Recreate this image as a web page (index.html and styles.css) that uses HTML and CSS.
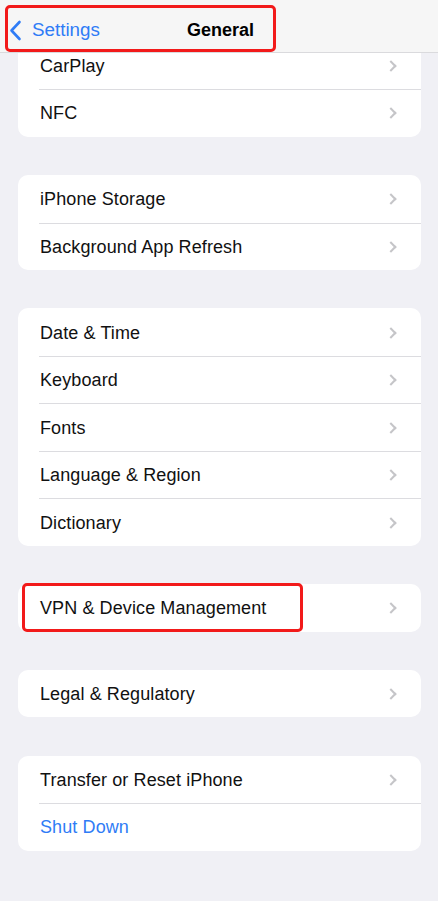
FILE: index.html
```html
<!DOCTYPE html>
<html>
<head>
<meta charset="utf-8">
<link rel="stylesheet" href="styles.css">
</head>
<body>
<div class="screen">
  <header class="nav">
    <div class="nav-back">
      <svg class="back-icon" width="13" height="21" viewBox="0 0 13 21"><path d="M10.5 2 L2.5 10.5 L10.5 19" fill="none" stroke="#2f7cf6" stroke-width="2.6" stroke-linecap="round" stroke-linejoin="round"/></svg>
      <span class="back-label">Settings</span>
    </div>
    <div class="nav-title">General</div>
    <div class="highlight nav-highlight"></div>
  </header>
  <main class="content">
    <section class="card first">
      <div class="row"><span class="label">CarPlay</span><span class="chev"></span></div>
      <div class="row"><span class="label">NFC</span><span class="chev"></span></div>
    </section>
    <section class="card">
      <div class="row"><span class="label">iPhone Storage</span><span class="chev"></span></div>
      <div class="row"><span class="label">Background App Refresh</span><span class="chev"></span></div>
    </section>
    <section class="card">
      <div class="row"><span class="label">Date &amp; Time</span><span class="chev"></span></div>
      <div class="row"><span class="label">Keyboard</span><span class="chev"></span></div>
      <div class="row"><span class="label">Fonts</span><span class="chev"></span></div>
      <div class="row"><span class="label">Language &amp; Region</span><span class="chev"></span></div>
      <div class="row"><span class="label">Dictionary</span><span class="chev"></span></div>
    </section>
    <section class="card vpn">
      <div class="row"><span class="label">VPN &amp; Device Management</span><span class="chev"></span></div>
      <div class="highlight vpn-highlight"></div>
    </section>
    <section class="card">
      <div class="row"><span class="label">Legal &amp; Regulatory</span><span class="chev"></span></div>
    </section>
    <section class="card">
      <div class="row"><span class="label">Transfer or Reset iPhone</span><span class="chev"></span></div>
      <div class="row"><span class="label action">Shut Down</span></div>
    </section>
  </main>
</div>
</body>
</html>
```

FILE: styles.css
```css
* { box-sizing: border-box; }
html, body {
  margin: 0;
  padding: 0;
  background: #f0f0f5;
}
body {
  font-family: "Liberation Sans", Arial, sans-serif;
  color: #111;
  -webkit-font-smoothing: antialiased;
}
.screen {
  width: 438px;
  height: 901px;
  overflow: hidden;
  position: relative;
}
.nav {
  position: relative;
  z-index: 2;
  height: 53px;
  background: #f6f6f6;
  border-bottom: 1px solid #dadadd;
  display: flex;
  align-items: center;
}
.nav-back {
  display: flex;
  align-items: center;
  padding-left: 9px;
  margin-top: 8px;
}
.back-icon { display: block; }
.back-label {
  color: #2f7cf6;
  font-size: 18.8px;
  margin-left: 10px;
}
.nav-title {
  position: absolute;
  left: 187px;
  top: 20px;
  font-size: 18px;
  font-weight: bold;
  color: #000;
}
.highlight {
  position: absolute;
  border: 3px solid #f21a1a;
  border-radius: 5px;
  pointer-events: none;
}
.nav-highlight {
  left: 5px;
  top: 5px;
  width: 271px;
  height: 47px;
}
.content {
  position: relative;
  z-index: 1;
  display: flex;
  flex-direction: column;
  gap: 38.3px;
  padding: 0 17px 0 18px;
}
.card {
  position: relative;
  background: #fff;
  border-radius: 10px;
}
.card.first { margin-top: -11.3px; }
.row {
  height: 47.5px;
  display: flex;
  align-items: center;
  justify-content: space-between;
  padding: 0 22px 0 22px;
  position: relative;
}
.row + .row::before {
  content: "";
  position: absolute;
  left: 21px;
  right: 0;
  top: 0;
  border-top: 1px solid #dcdce0;
}
.label {
  font-size: 18px;
  color: #111;
  letter-spacing: 0.1px;
  padding-top: 2px;
}
.label.action { color: #2f7cf6; }
.chev {
  width: 8px;
  height: 8px;
  border-top: 2px solid #c5c5c8;
  border-right: 2px solid #c5c5c8;
  transform: rotate(45deg);
  margin-right: 4px;
  margin-top: 1px;
}
.vpn-highlight {
  left: 4px;
  top: -1px;
  width: 281px;
  height: 49px;
}
```
